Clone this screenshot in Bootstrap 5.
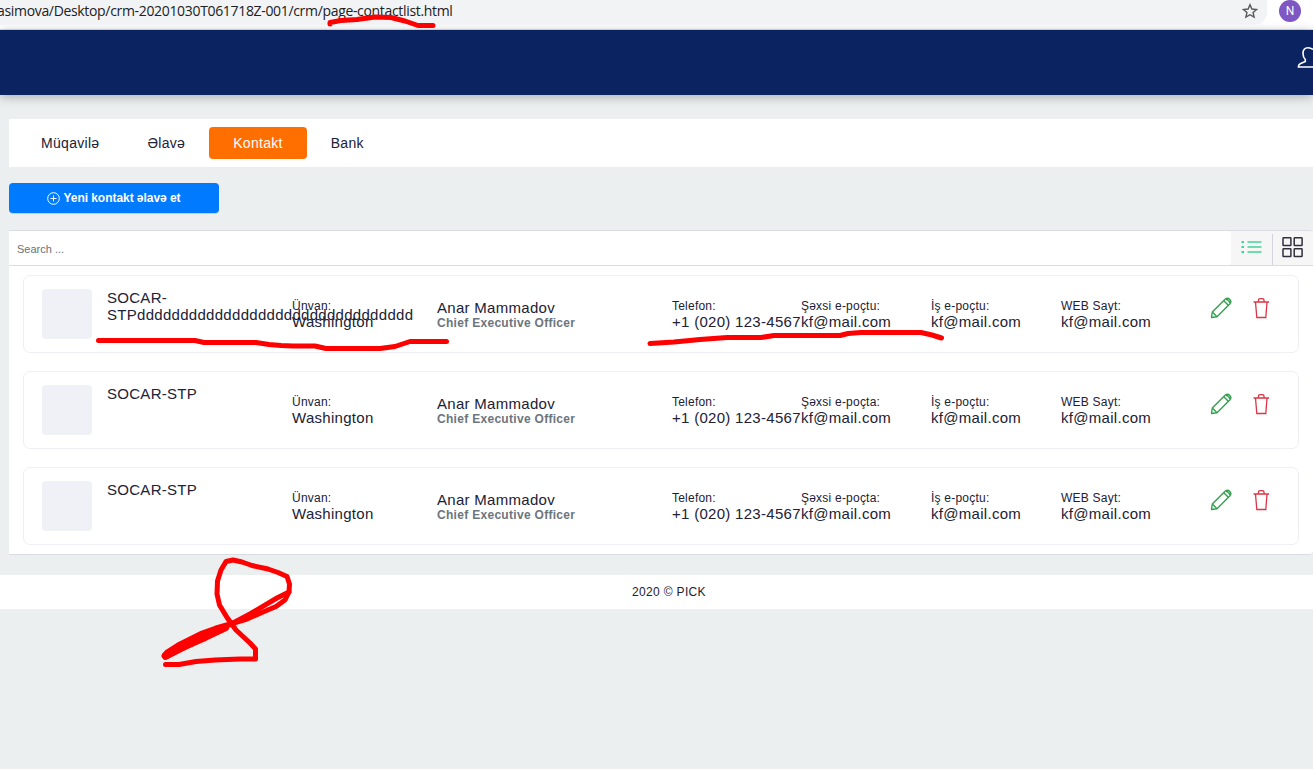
<!DOCTYPE html>
<html lang="az">
<head>
<meta charset="utf-8">
<title>Kontakt</title>
<link rel="stylesheet" href="https://cdn.jsdelivr.net/npm/bootstrap@5.3.0/dist/css/bootstrap.min.css">
<style>
body{background:#ebeff0;font-family:"Liberation Sans",Arial,sans-serif;color:#212135;height:769px;overflow:hidden;font-size:15px;line-height:17px}
svg{display:block;fill:none}
.browser{height:30px;border-bottom:1px solid #dcdee1;background:#fff}
.omnibox{width:1267px;height:25px;background:#f1f3f4;border-radius:0 0 13px 0;font:14px/22px "Open Sans",sans-serif;color:#202124;white-space:nowrap}
.url{margin-left:-3px;display:inline-block;letter-spacing:-.33px}
.avatar-n{width:22px;height:22px;background:#7e57c2;color:#fff;font:12px/22px Roboto,sans-serif;margin-left:12px}
.topbar{height:65px;background:#0b2361;box-shadow:0 2px 10px rgba(0,0,0,.28)}
.page{margin-left:9px;padding-top:24px}
.tabs{height:48px;background:#fff;padding:8px}
.tabs .nav-link{height:32px;padding:0 24px;font-size:14px;line-height:32px;letter-spacing:.3px;color:#212135;border-radius:4px}
.tabs .nav-link.active{background:#ff6f00;color:#fff}
.add{width:210px;height:30px;margin-top:16px;background:#007bff;color:#fff;border:0;border-radius:4px;font-size:12px;font-weight:700;line-height:28px;letter-spacing:-.05px;padding:0 0 1px;box-shadow:0 1px 0 #c3cfdc}
.panel{margin-top:17px;height:325px;background:#fff;border:solid #d9dde3;border-width:1px 0;border-radius:0 4px 4px 0}
.search{height:35px;border-bottom:1px solid #d9dce3;background:#f6f6f6;border-radius:0 4px 0 0}
.search input{width:1222px;height:34px;border:0;border-radius:0 3px 3px 0;padding:2px 8px 1px;font-size:11px;background:#fff;outline:0}
.search input::placeholder{color:#6d7078;opacity:1}
.divider{width:1px;height:31px;background:#d5d5df;margin:3px 9px 0 10px}
.contacts{padding:9px 14px 0;gap:18px}
.contact{height:78px;border:1px solid #eeeff4;border-radius:7px;padding:13px 0 0 18px}
.thumb{width:50px;height:50px;background:#f0f1f6;border-radius:4px;margin-right:15px}
.val,.company{letter-spacing:.29px}
.company{width:185px}
.info{padding-top:10px;white-space:nowrap}
.lbl{font-size:12px;line-height:15px;letter-spacing:.22px;margin-bottom:-1px}
.w-addr{width:145px}.w-person{width:235px}.w-tel{width:129px}.w-mail{width:130px}.w-web{width:149px}
.role{font-size:12px;line-height:14px;font-weight:700;color:#6c757d;letter-spacing:.3px}
.foot{height:34px;margin-top:20px;background:#fff;font-size:12px;line-height:34px;letter-spacing:.33px;padding-left:25px}
.marks{left:0;top:0;pointer-events:none}
</style>
<script src="https://cdn.jsdelivr.net/npm/bootstrap@5.3.0/dist/js/bootstrap.bundle.min.js"></script>
</head>
<body class="position-relative">
<svg width="0" height="0" class="position-absolute" aria-hidden="true">
<symbol id="pencil" viewBox="0 0 22 22"><g stroke="#35a04f" stroke-width="1.400" stroke-linejoin="round"><path d="M1.500 20.500 2.300 15 15.300 2Q17.500.2 19.700 2.300T20 6.700L7 19.700Z"/><path d="M2.300 15 7 19.700M13.800 3.700 18.300 8.200M16 2.200Q19.300 2.700 19.800 6"/></g></symbol>
<symbol id="trash" viewBox="0 0 17 22"><g stroke="#dc3545" stroke-width="1.300"><path d="M.5 5h15.500M5.500 4.800V3Q5.500 1.700 7 1.700h2.500q1.500 0 1.500 1.300v1.800M2.500 5l1.300 15.500h9L14 5"/></g></symbol>
</svg>
<header class="browser d-flex">
<div class="omnibox d-flex justify-content-between"><span class="url">asimova/Desktop/crm-20201030T061718Z-001/crm/page-contactlist.html</span>
<svg width="16" height="16" viewBox="0 0 16 16" style="margin:3px 9px 0 0"><path d="M8 1.700 9.900 6l4.700.45-3.550 3.100 1.050 4.600L8 11.700l-4.100 2.450 1.050-4.600L1.400 6.450 6.100 6Z" stroke="#55585c" stroke-width="1.400"/></svg></div>
<div class="avatar-n rounded-circle text-center">N</div>
</header>
<nav class="topbar d-flex justify-content-end"><svg width="16" height="24" viewBox="0 0 16 24" style="margin-top:16px"><path d="M16 3.500C14.500 1.900 12.800 1.700 11 1.700 8 1.700 6 4 6 7.500c0 2.500.8 4.500 2.300 6v2L3.200 17.700C1.700 18.400 1.400 19.500 1.400 21H16" stroke="#fff" stroke-width="1.600"/></svg></nav>
<main class="page">
<nav class="tabs nav flex-nowrap"><a class="nav-link">Müqavilə</a><a class="nav-link">Əlavə</a><a class="nav-link active">Kontakt</a><a class="nav-link">Bank</a></nav>
<button class="add d-flex align-items-center justify-content-center"><svg width="13" height="13" viewBox="0 0 13 13" style="margin:2px 3px 0 0"><path d="M6.500 3.500v6M3.500 6.500h6" stroke="#fff"/><circle cx="6.500" cy="6.500" r="5.800" stroke="#fff"/></svg>Yeni kontakt əlavə et</button>
<section class="panel">
<div class="search d-flex"><input type="text" placeholder="Search ...">
<svg width="21" height="14" viewBox="0 0 21 14" style="margin:9px 0 0 10px"><path d="M.5 2h2.500M.5 7h2.500M.5 12h2.500" stroke="#2ed8a3" stroke-width="2"/><path d="M6.500 2h14M6.500 7h14M6.500 12h14" stroke="#6fdcae" stroke-width="1.800"/></svg>
<div class="divider"></div>
<svg width="21" height="21" viewBox="0 0 21 21" style="margin-top:6px"><g stroke="#30303c" stroke-width="1.500"><rect x="1" y=".8" width="7.900" height="7.700" rx=".6"/><rect x="12.200" y=".8" width="7.900" height="7.700" rx=".6"/><rect x="1" y="11.800" width="7.900" height="7.700" rx=".6"/><rect x="12.200" y="11.800" width="7.900" height="7.700" rx=".6"/></g></svg></div>
<div class="contacts d-flex flex-column">
<article class="contact d-flex"><div class="thumb"></div><div class="company">SOCAR-<br>STPdddddddddddddddddddddddddddddddd</div><div class="info w-addr"><div class="lbl">Ünvan:</div><div class="val">Washington</div></div><div class="info w-person"><div class="val">Anar Mammadov</div><div class="role">Chief Executive Officer</div></div><div class="info w-tel"><div class="lbl">Telefon:</div><div class="val">+1 (020) 123-4567</div></div><div class="info w-mail"><div class="lbl">Şəxsi e-poçtu:</div><div class="val">kf@mail.com</div></div><div class="info w-mail"><div class="lbl">İş e-poçtu:</div><div class="val">kf@mail.com</div></div><div class="info w-web"><div class="lbl">WEB Sayt:</div><div class="val">kf@mail.com</div></div><svg class="mt-2" width="22" height="22"><use href="#pencil"/></svg><svg class="mt-2" width="17" height="22" style="margin-left:21px"><use href="#trash"/></svg></article>
<article class="contact d-flex"><div class="thumb"></div><div class="company">SOCAR-STP</div><div class="info w-addr"><div class="lbl">Ünvan:</div><div class="val">Washington</div></div><div class="info w-person"><div class="val">Anar Mammadov</div><div class="role">Chief Executive Officer</div></div><div class="info w-tel"><div class="lbl">Telefon:</div><div class="val">+1 (020) 123-4567</div></div><div class="info w-mail"><div class="lbl">Şəxsi e-poçta:</div><div class="val">kf@mail.com</div></div><div class="info w-mail"><div class="lbl">İş e-poçtu:</div><div class="val">kf@mail.com</div></div><div class="info w-web"><div class="lbl">WEB Sayt:</div><div class="val">kf@mail.com</div></div><svg class="mt-2" width="22" height="22"><use href="#pencil"/></svg><svg class="mt-2" width="17" height="22" style="margin-left:21px"><use href="#trash"/></svg></article>
<article class="contact d-flex"><div class="thumb"></div><div class="company">SOCAR-STP</div><div class="info w-addr"><div class="lbl">Ünvan:</div><div class="val">Washington</div></div><div class="info w-person"><div class="val">Anar Mammadov</div><div class="role">Chief Executive Officer</div></div><div class="info w-tel"><div class="lbl">Telefon:</div><div class="val">+1 (020) 123-4567</div></div><div class="info w-mail"><div class="lbl">Şəxsi e-poçta:</div><div class="val">kf@mail.com</div></div><div class="info w-mail"><div class="lbl">İş e-poçtu:</div><div class="val">kf@mail.com</div></div><div class="info w-web"><div class="lbl">WEB Sayt:</div><div class="val">kf@mail.com</div></div><svg class="mt-2" width="22" height="22"><use href="#pencil"/></svg><svg class="mt-2" width="17" height="22" style="margin-left:21px"><use href="#trash"/></svg></article>
</div>
</section>
</main>
<footer class="foot text-center">2020 © PICK</footer>
<svg class="marks position-absolute" width="1313" height="769" viewBox="0 0 1313 769"><g stroke="#f00" stroke-width="5" stroke-linecap="round" stroke-linejoin="round">
<path d="M330 24v-1.500L341 20.500 357 19.500 375 17 391 17.500 405 21 418 25.500H433"/>
<path d="M98.500 340.500H195L204 342.500H256L269 344.500 281 345.500 293 346H315L326 348.500H380L395 346.500 410 341.500H446.500"/>
<path d="M650 343.500 674 342 700 339.500 727 337.500H761L774 335.500H840L848 333.500 861 332.500H921L932 335 941.500 338"/>
<path d="M165.500 664.500H179L196 661.500 215 660 240 659H255.500V649L250 643 236 630 227 617.500 219.500 605 217 594 217.500 581 221 570 226 561.500 233 560 242 562 252 565.500 268 569 278 572.500 287 576.500 289.500 584 289 592 285 600 276 606.500 263 612 247 619 232 623.500 204 638 165 657.500"/>
<path d="M164 656 167 652 178 645 190 639 202 633 216 628 232 623.500 250 614 277 598 289 592"/>
<path d="M166 655.500 183 646.500 205 637 225 627.500" stroke-width="8"/>
</g></svg>
</body>
</html>
